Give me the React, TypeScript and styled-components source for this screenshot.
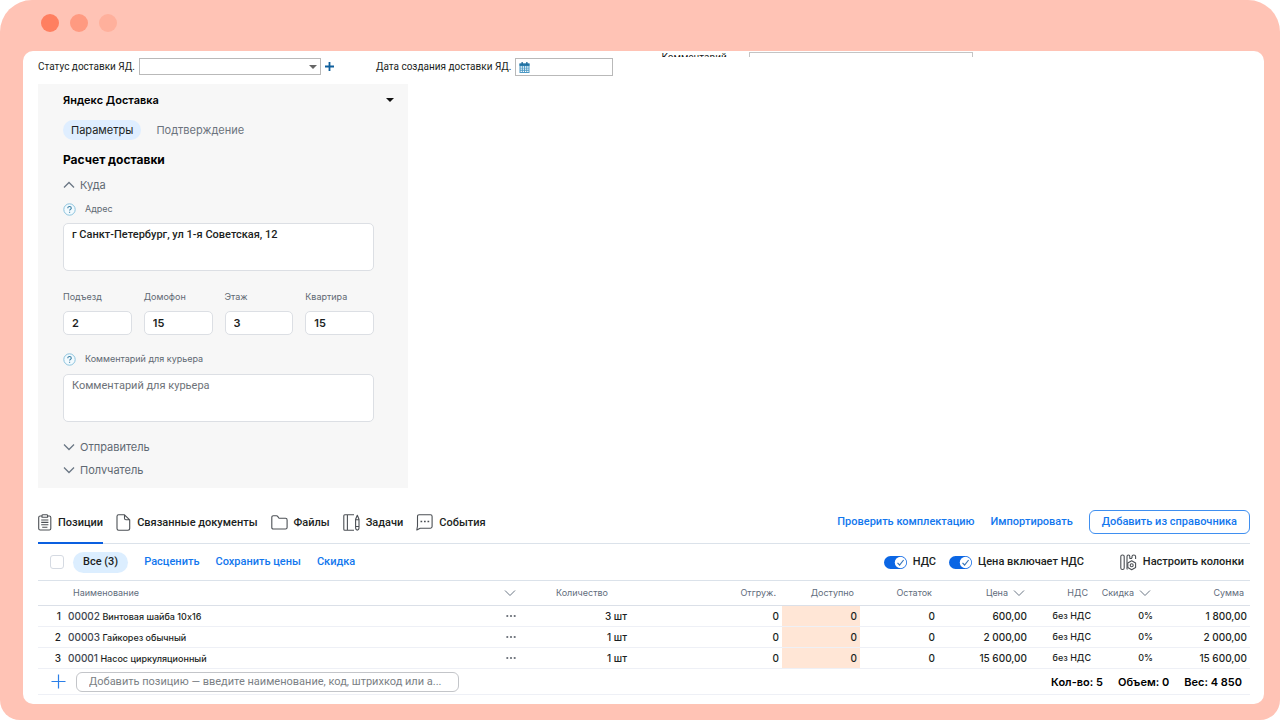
import React, { useState } from "react";
import styled, { createGlobalStyle } from "styled-components";

const GlobalStyle = createGlobalStyle`
  *, *::before, *::after { box-sizing: border-box; }
  body {
    margin: 0;
    background: #fff;
    color: #1c1f23;
    font-family: Inter, "Liberation Sans", sans-serif;
    font-size: 11px;
    line-height: 16px;
  }
  button, input, textarea, select { font: inherit; color: inherit; }
  button { background: none; border: 0; padding: 0; cursor: pointer; white-space: nowrap; }
  svg { display: block; flex: none; }
`;

const Frame = styled.div`
  min-height: 100vh;
  display: flex;
  flex-direction: column;
  background: #ffc3b5;
  border-radius: 32px 32px 20px 20px;
  padding: 0 16px 16px 23px;
`;

const TitleBar = styled.div`
  display: flex;
  gap: 11px;
  padding: 14px 18px 19px;
`;

const WindowDot = styled.span<{ $color: string }>`
  width: 18px;
  height: 18px;
  border-radius: 50%;
  background: ${(p) => p.$color};
`;

const Screen = styled.main`
  flex: 1;
  background: #fff;
  border-radius: 10px;
  padding: 0 14px 9px 15px;
`;

const TopFields = styled.div`
  display: flex;
  align-items: flex-start;
  height: 33px;
  font-family: Roboto, "Liberation Sans", sans-serif;
  font-size: 10px;
`;

const TopField = styled.div<{ $space: number }>`
  display: flex;
  align-items: center;
  gap: 4px;
  padding-top: 7px;
  margin-right: ${(p) => p.$space}px;
  white-space: nowrap;
`;

const StatusBox = styled.div`
  position: relative;
  width: 182px;

  svg { position: absolute; right: 4px; top: 7px; pointer-events: none; }
`;

const StatusSelect = styled.select`
  display: block;
  width: 100%;
  height: 17px;
  border: 1px solid #b9b9b9;
  border-radius: 0;
  background: #fff;
  appearance: none;
`;

const DateBox = styled.div`
  display: flex;
  align-items: center;
  width: 98px;
  height: 18px;
  padding-left: 3px;
  border: 1px solid #b9b9b9;
`;

const DateInput = styled.input`
  min-width: 0;
  flex: 1;
  height: 14px;
  border: 0;
  outline: 0;
`;

const ClippedField = styled.div`
  display: flex;
  gap: 22px;
  height: 6px;
  overflow: hidden;
  line-height: 13px;
`;

const ClippedInput = styled.input`
  width: 224px;
  height: 18px;
  margin-top: 1px;
  border: 1px solid #c4c4c4;
`;

const Panel = styled.section`
  width: 370px;
  height: 404px;
  padding: 8px 34px 0 25px;
  background: #f7f7f7;
`;

const PanelHeader = styled.header`
  display: flex;
  align-items: center;
  justify-content: space-between;
  margin-right: -20px;
`;

const PanelTitle = styled.h2`
  margin: 0;
  font-size: 11px;
  line-height: 16px;
  font-weight: 600;
  color: #000;
`;

const PanelTabs = styled.div`
  display: flex;
  gap: 7px;
  margin-top: 12px;
`;

const PillTab = styled.button<{ $active?: boolean }>`
  height: 20px;
  padding: 0 8px;
  border-radius: 10px;
  background: ${(p) => (p.$active ? "#dfeeff" : "transparent")};
  color: ${(p) => (p.$active ? "#1c1f23" : "#6b737d")};
`;

const SectionTitle = styled.h3`
  margin: 12px 0 0;
  font-size: 12px;
  line-height: 16px;
  font-weight: 700;
  color: #000;
`;

const Fold = styled.button<{ $top: number }>`
  display: flex;
  align-items: center;
  gap: 5px;
  margin-top: ${(p) => p.$top}px;
  color: #5f6973;
`;

const FoldClip = styled.div`
  height: 19px;
  overflow: hidden;
`;

const HintRow = styled.div<{ $top: number }>`
  display: flex;
  align-items: center;
  gap: 9px;
  height: 14px;
  margin-top: ${(p) => p.$top}px;
`;

const FieldLabel = styled.label`
  font-size: 9px;
  line-height: 14px;
  color: #5f6973;
`;

const AddressArea = styled.textarea<{ $top: number }>`
  display: block;
  width: 100%;
  height: 48px;
  margin-top: ${(p) => p.$top}px;
  padding: 3px 8px;
  border: 1px solid #dcdfe4;
  border-radius: 5px;
  background: #fff;
  color: #1c1f23;
  font-family: Roboto, Inter, sans-serif;
  font-weight: 500;
  resize: none;
  outline: 0;

  &::placeholder { color: #6d7278; opacity: 1; font-weight: 400; }
`;

const SmallFields = styled.div`
  display: grid;
  grid-template-columns: repeat(4, 1fr);
  gap: 12px;
  margin-top: 19px;
`;

const SmallField = styled.div`
  display: flex;
  flex-direction: column;
  gap: 7px;
  min-width: 0;
`;

const SmallInput = styled.input`
  width: 100%;
  height: 24px;
  padding: 0 8px;
  border: 1px solid #dcdfe4;
  border-radius: 5px;
  font-weight: 600;
`;

const TabBar = styled.nav`
  display: flex;
  align-items: center;
  height: 38px;
  margin-top: 18px;
  border-bottom: 1px solid #dbe2ea;
  font-family: Roboto, Inter, sans-serif;
  font-weight: 500;
`;

const Tab = styled.button<{ $active?: boolean }>`
  display: flex;
  align-items: center;
  gap: 6px;
  height: 38px;
  padding-bottom: 5px;
  padding-top: 3px;
  margin-right: 13px;
  border-bottom: 2px solid ${(p) => (p.$active ? "#0a5fe0" : "transparent")};
`;

const Spacer = styled.div`
  flex: 1;
`;

const LinkButton = styled.button<{ $gap?: number }>`
  margin-right: ${(p) => p.$gap ?? 16}px;
  color: #1277ee;
`;

const OutlineButton = styled(LinkButton)`
  height: 24px;
  padding: 0 12px;
  border: 1px solid #3f8ff0;
  border-radius: 6px;
`;

const BarActions = styled.div`
  display: flex;
  align-items: center;
  padding-bottom: 5px;
`;

const Toolbar = styled.div`
  display: flex;
  align-items: center;
  height: 37px;
  padding: 0 6px 0 12px;
  border-bottom: 1px solid #dbe2ea;
  font-family: Roboto, Inter, sans-serif;
  font-weight: 500;
`;

const CheckAll = styled.input`
  appearance: none;
  width: 14px;
  height: 14px;
  margin: 0 9px 0 0;
  border: 1px solid #d5dae2;
  border-radius: 3px;
`;

const AllPill = styled.button`
  height: 21px;
  margin-right: 16px;
  padding: 0 10px;
  border-radius: 11px;
  background: #dceeff;
`;

const SwitchLabel = styled.label<{ $gap: number }>`
  display: flex;
  align-items: center;
  gap: 6px;
  margin-right: ${(p) => p.$gap}px;
  white-space: nowrap;
`;

const SwitchTrack = styled.span`
  position: relative;
  width: 23px;
  height: 13px;

  svg { position: absolute; inset: 0; pointer-events: none; }
`;

const SwitchInput = styled.input`
  appearance: none;
  display: block;
  width: 23px;
  height: 13px;
  margin: 0;
  border-radius: 7px;
  background: #0b66e4;
`;

const ColumnsButton = styled.button`
  display: flex;
  align-items: center;
  gap: 6px;
`;

const Table = styled.table`
  width: 100%;
  border-collapse: separate;
  border-spacing: 0;
  table-layout: fixed;
  font-size: 10px;
`;

const HeadCell = styled.th<{ $left?: boolean; $end?: number }>`
  height: 25px;
  padding: 0 ${(p) => p.$end ?? 6}px 0 ${(p) => (p.$left ? 9 : 0)}px;
  border-bottom: 1px solid #dbe0e8;
  color: #5f6d7c;
  font-size: 9px;
  font-weight: 400;
  text-align: right;
`;

const HeadInner = styled.span<{ $spread?: boolean }>`
  display: flex;
  align-items: center;
  justify-content: ${(p) => (p.$spread ? "space-between" : "flex-end")};
  gap: 5px;
`;

const Cell = styled.td<{ $tint?: boolean; $small?: boolean }>`
  height: 21px;
  padding: 0 3px 0 0;
  border-bottom: 1px solid #eef0f6;
  background: ${(p) => (p.$tint ? "#ffe6d6" : "transparent")};
  font-size: ${(p) => (p.$small ? 9 : 10)}px;
  text-align: right;
  font-weight: 500;
  white-space: nowrap;
`;

const NameCell = styled.div`
  display: flex;
  align-items: center;
  justify-content: space-between;
  padding: 0 1px 0 4px;
  font-size: 9px;
`;

const ProductCode = styled.span`
  font-size: 10px;
  color: #3f4650;
`;

const Footer = styled.div`
  display: flex;
  align-items: center;
  gap: 10px;
  height: 26px;
  padding: 0 8px 0 13px;
  border-bottom: 1px solid #eef0f6;
`;

const AddInput = styled.input`
  width: 383px;
  height: 20px;
  padding: 0 12px;
  border: 1px solid #c3c5c9;
  border-radius: 6px;
  font-family: Roboto, Inter, sans-serif;

  &::placeholder { color: #7b7f85; opacity: 1; }
`;

const Totals = styled.div`
  display: flex;
  gap: 15px;
  font-weight: 600;
  white-space: nowrap;
  color: #000;
`;

const Caret = ({ color, size }: { color: string; size: number }) => (
  <svg width={size} height={size / 2} viewBox="0 0 8 4">
    <path d="M0 0h8L4 4z" fill={color} />
  </svg>
);

const Chevron = ({ up, color = "#6b7785", thin }: { up?: boolean; color?: string; thin?: boolean }) => (
  <svg width="12" height="8" viewBox="0 0 12 8" fill="none" stroke={color} strokeWidth={thin ? 1 : 1.3}>
    <path d={up ? "M1 6.5 6 1.5l5 5" : "M1 1.5l5 5 5-5"} />
  </svg>
);

const HintIcon = () => (
  <svg width="13" height="13" viewBox="0 0 13 13" fill="none">
    <circle cx="6.500" cy="6.500" r="5.700" fill="#f2fafe" stroke="#8cc4de" />
    <path d="M4.800 5.200c0-2.300 3.500-2.200 3.500 0 0 1.200-1.700 1.200-1.700 2.400M6.600 8.700v1.100" stroke="#3b7fa3" strokeWidth="1.100" />
  </svg>
);

const CalendarIcon = () => (
  <svg width="11" height="11" viewBox="0 0 11 11">
    <path d="M.5 1.500h10V11H.5z" fill="#4b98c4" />
    <path d="M.5 1.500h10v2.300H.5z" fill="#2475a6" />
    <path d="M2.500 0h1.300v2.500H2.500zM7.200 0h1.300v2.500H7.200z" fill="#1d6795" />
    <path d="M1.600 5h8M1.600 7.200h8M1.600 9.400h8" stroke="#fff" strokeDasharray="1.300 .9" strokeWidth="1.300" />
  </svg>
);

const iconProps = { fill: "none", stroke: "#4c5055", strokeWidth: 1.1, strokeLinejoin: "round" as const };

const ClipboardIcon = () => (
  <svg width="14" height="17" viewBox="0 0 14 17" {...iconProps}>
    <path d="M4 2H2.200Q.7 2 .7 3.500v11Q.7 16 2.200 16h9.100q1.500 0 1.500-1.500v-11Q12.800 2 11.300 2H9.500" />
    <path d="M4 1.500Q4 .7 5 .7h3.600q1 0 1 .8v1.700H4zM3.200 6h7.200M3.200 8.400h7.200M3.200 10.800h7.200M4.200 13.200h5.200" />
  </svg>
);

const FileIcon = () => (
  <svg width="15" height="17" viewBox="0 0 15 17" {...iconProps}>
    <path d="M2.600.8h5.900l5.200 5v8.700q0 1.700-1.700 1.700H2.600Q1 16.200 1 14.500v-12Q1 .8 2.600.8zM8.500.8v3.500q0 1.500 1.500 1.500h3.700" />
  </svg>
);

const FolderIcon = () => (
  <svg width="17" height="15" viewBox="0 0 17 15" {...iconProps}>
    <path d="M.8 12.400V2.400Q.8.800 2.400.800h3.100q.8 0 1.200.6l.9 1.300q.4.600 1.200.6h5.700q1.600 0 1.600 1.600v7.500q0 1.600-1.600 1.600H2.400Q.8 14 .8 12.400z" />
  </svg>
);

const TasksIcon = () => (
  <svg width="17" height="17" viewBox="0 0 17 17" {...iconProps}>
    <path d="M11 .8H1.800Q.8.800.8 1.800v13.400q0 1 1 1H11M4.400.8v15.400" />
    <path d="M14.300 1.200l1.700 4v8.400q0 2.500-1.700 2.500t-1.700-2.500V5.200zM12.600 5.800H16M12.600 12.500H16" />
  </svg>
);

const EventsIcon = () => (
  <svg width="17" height="17" viewBox="0 0 17 17" {...iconProps}>
    <path d="M1.500 2.400Q1.500.8 3.100.8h11.400q1.600 0 1.600 1.600v10.200q0 1.600-1.600 1.600H4.200L.8 16l.7-4z" />
    <path d="M4.500 7.500h1.700M8 7.500h1.700M11.500 7.500h1.700" strokeWidth="1.700" />
  </svg>
);

const ColumnsIcon = () => (
  <svg width="17" height="17" viewBox="0 0 17 17" {...iconProps}>
    <rect x=".8" y="1" width="3.400" height="14.500" rx="1.600" />
    <path d="M7 15.200V2.500Q7 1 8.400 1t1.400 1.500v2.300M6.900 15.200h.6M12 4V2.500Q12 1 13.800 1t1.800 1.500v2.600M9.800 4.200Q10.900 5 12 4" />
    <path d="M11.700 6.800l3.900 2.200v4.500l-3.900 2.200-3.900-2.200V9z" />
    <circle cx="11.700" cy="11.300" r="1.500" />
  </svg>
);

const DotsIcon = () => (
  <svg width="10" height="4" viewBox="0 0 10 4" fill="#666c75">
    <circle cx="1.300" cy="2" r="1.100" />
    <circle cx="5" cy="2" r="1.100" />
    <circle cx="8.700" cy="2" r="1.100" />
  </svg>
);

const Switch = ({ text, gap }: { text: string; gap: number }) => (
  <SwitchLabel $gap={gap}>
    <SwitchTrack>
      <SwitchInput type="checkbox" role="switch" defaultChecked />
      <svg width="23" height="13" viewBox="0 0 23 13" fill="none">
        <circle cx="16.500" cy="6.500" r="5.700" fill="#fff" />
        <path d="M13.500 6.800l2.100 2.200 4-5" stroke="#3c77b8" strokeWidth="1.200" />
      </svg>
    </SwitchTrack>
    {text}
  </SwitchLabel>
);

const rows = [
  { code: "00002", name: "Винтовая шайба 10x16", qty: 3, price: "600,00", sum: "1 800,00" },
  { code: "00003", name: "Гайкорез обычный", qty: 1, price: "2 000,00", sum: "2 000,00" },
  { code: "00001", name: "Насос циркуляционный", qty: 1, price: "15 600,00", sum: "15 600,00" },
];

const addressParts = [
  { id: "entrance", label: "Подъезд", value: "2" },
  { id: "intercom", label: "Домофон", value: "15" },
  { id: "floor", label: "Этаж", value: "3" },
  { id: "flat", label: "Квартира", value: "15" },
];

const columnWidths = ["26px", "auto", "110px", "152px", "78px", "78px", "92px", "64px", "62px", "94px"];

export default function App() {
  const [panelTab, setPanelTab] = useState(0);
  return (
    <>
      <GlobalStyle />
      <Frame>
        <TitleBar>
          <WindowDot $color="#ff7f60" />
          <WindowDot $color="#ff9a81" />
          <WindowDot $color="#ffb09c" />
        </TitleBar>
        <Screen>
          <TopFields>
            <TopField $space={42}>
              <label htmlFor="status">Статус доставки ЯД.</label>
              <StatusBox>
                <StatusSelect id="status" />
                <Caret color="#666" size={8} />
              </StatusBox>
              <button aria-label="Добавить статус">
                <svg width="9" height="9" viewBox="0 0 9 9" stroke="#0f5f9c" strokeWidth="1.800">
                  <path d="M0 4.500h9M4.500 0v9" />
                </svg>
              </button>
            </TopField>
            <TopField $space={48}>
              <label htmlFor="created">Дата создания доставки ЯД.</label>
              <DateBox>
                <CalendarIcon />
                <DateInput id="created" type="text" />
              </DateBox>
            </TopField>
            <ClippedField>
              <label htmlFor="note">Комментарий</label>
              <ClippedInput id="note" type="text" />
            </ClippedField>
          </TopFields>

          <Panel>
            <PanelHeader>
              <PanelTitle>Яндекс Доставка</PanelTitle>
              <button aria-label="Свернуть">
                <Caret color="#111" size={8} />
              </button>
            </PanelHeader>
            <PanelTabs>
              {["Параметры", "Подтверждение"].map((t, i) => (
                <PillTab key={t} $active={panelTab === i} onClick={() => setPanelTab(i)}>
                  {t}
                </PillTab>
              ))}
            </PanelTabs>
            <SectionTitle>Расчет доставки</SectionTitle>
            <Fold $top={9}>
              <Chevron up />
              Куда
            </Fold>
            <HintRow $top={9}>
              <HintIcon />
              <FieldLabel htmlFor="address">Адрес</FieldLabel>
            </HintRow>
            <AddressArea id="address" $top={7} defaultValue="г Санкт-Петербург, ул 1-я Советская, 12" />
            <SmallFields>
              {addressParts.map((f) => (
                <SmallField key={f.id}>
                  <FieldLabel htmlFor={f.id}>{f.label}</FieldLabel>
                  <SmallInput id={f.id} defaultValue={f.value} />
                </SmallField>
              ))}
            </SmallFields>
            <HintRow $top={17}>
              <HintIcon />
              <FieldLabel htmlFor="courier">Комментарий для курьера</FieldLabel>
            </HintRow>
            <AddressArea id="courier" $top={8} placeholder="Комментарий для курьера" />
            <Fold $top={17}>
              <Chevron />
              Отправитель
            </Fold>
            <FoldClip>
              <Fold $top={7}>
                <Chevron />
                Получатель
              </Fold>
            </FoldClip>
          </Panel>

          <TabBar>
            <Tab $active>
              <ClipboardIcon />
              Позиции
            </Tab>
            <Tab>
              <FileIcon />
              Связанные документы
            </Tab>
            <Tab>
              <FolderIcon />
              Файлы
            </Tab>
            <Tab>
              <TasksIcon />
              Задачи
            </Tab>
            <Tab>
              <EventsIcon />
              События
            </Tab>
            <Spacer />
            <BarActions>
              <LinkButton>Проверить комплектацию</LinkButton>
              <LinkButton>Импортировать</LinkButton>
              <OutlineButton $gap={0}>Добавить из справочника</OutlineButton>
            </BarActions>
          </TabBar>

          <Toolbar>
            <CheckAll type="checkbox" aria-label="Выбрать все" />
            <AllPill>Все (3)</AllPill>
            <LinkButton>Расценить</LinkButton>
            <LinkButton>Сохранить цены</LinkButton>
            <LinkButton>Скидка</LinkButton>
            <Spacer />
            <Switch text="НДС" gap={13} />
            <Switch text="Цена включает НДС" gap={36} />
            <ColumnsButton>
              <ColumnsIcon />
              Настроить колонки
            </ColumnsButton>
          </Toolbar>

          <Table>
            <colgroup>
              {columnWidths.map((w, i) => (
                <col key={i} style={{ width: w }} />
              ))}
            </colgroup>
            <thead>
              <tr>
                <HeadCell />
                <HeadCell $left $end={4}>
                  <HeadInner $spread>
                    Наименование
                    <Chevron thin />
                  </HeadInner>
                </HeadCell>
                <HeadCell $end={22}>Количество</HeadCell>
                <HeadCell>Отгруж.</HeadCell>
                <HeadCell>Доступно</HeadCell>
                <HeadCell>Остаток</HeadCell>
                <HeadCell $end={5}>
                  <HeadInner>
                    Цена
                    <Chevron thin />
                  </HeadInner>
                </HeadCell>
                <HeadCell>НДС</HeadCell>
                <HeadCell $end={5}>
                  <HeadInner>
                    Скидка
                    <Chevron thin />
                  </HeadInner>
                </HeadCell>
                <HeadCell>Сумма</HeadCell>
              </tr>
            </thead>
            <tbody>
              {rows.map((r, i) => (
                <tr key={r.code}>
                  <Cell>{i + 1}</Cell>
                  <Cell>
                    <NameCell>
                      <span>
                        <ProductCode>{r.code}</ProductCode> {r.name}
                      </span>
                      <DotsIcon />
                    </NameCell>
                  </Cell>
                  <Cell>{r.qty} шт</Cell>
                  <Cell>0</Cell>
                  <Cell $tint>0</Cell>
                  <Cell>0</Cell>
                  <Cell>{r.price}</Cell>
                  <Cell $small>без НДС</Cell>
                  <Cell $small>0%</Cell>
                  <Cell>{r.sum}</Cell>
                </tr>
              ))}
            </tbody>
          </Table>

          <Footer>
            <button aria-label="Добавить позицию">
              <svg width="15" height="15" viewBox="0 0 15 15" stroke="#2b7fe8" strokeWidth="1.200">
                <path d="M.5 7.500h14M7.500.5v14" />
              </svg>
            </button>
            <AddInput
              aria-label="Новая позиция"
              placeholder="Добавить позицию — введите наименование, код, штрихкод или а..."
            />
            <Spacer />
            <Totals>
              <span>Кол-во: 5</span>
              <span>Объем: 0</span>
              <span>Вес: 4 850</span>
            </Totals>
          </Footer>
        </Screen>
      </Frame>
    </>
  );
}
